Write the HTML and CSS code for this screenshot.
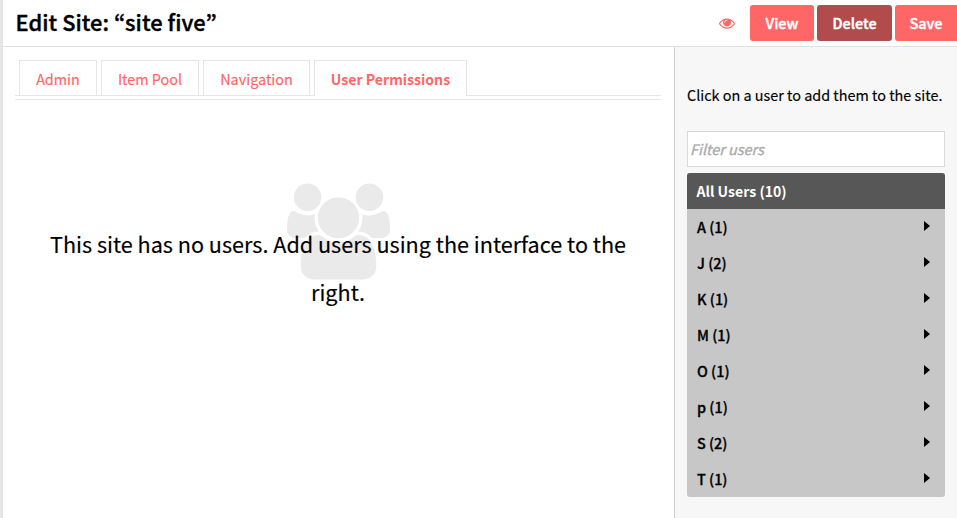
FILE: index.html
```html
<!DOCTYPE html>
<html lang="en">
<head>
<meta charset="utf-8">
<title>Edit Site</title>
<link rel="stylesheet" href="styles.css">
</head>
<body>
<div class="app">
  <header class="topbar">
    <h1 class="title">Edit Site: “site five”</h1>
    <div class="actions">
      <svg class="eye" viewBox="0 0 1792 1792"><path d="M1664 960q-152-236-381-353 61 104 61 225 0 185-131.5 316.5t-316.5 131.5-316.5-131.5-131.5-316.5q0-121 61-225-229 117-381 353 133 205 333.5 326.500t434.500 121.500 434.500-121.500 333.500-326.500zm-720-384q0-20-14-34t-34-14q-125 0-214.500 89.500t-89.500 214.500q0 20 14 34t34 14 34-14 14-34q0-86 61-147t147-61q20 0 34-14t14-34zm848 384q0 34-20 69-140 230-376.500 368.500t-499.500 138.500-499.500-139-376.500-368q-20-35-20-69t20-69q140-229 376.500-368t499.500-139 499.500 139 376.500 368q20 35 20 69z"/></svg>
      <button class="btn view">View</button>
      <button class="btn delete">Delete</button>
      <button class="btn save">Save</button>
    </div>
  </header>
  <div class="body">
    <main class="main">
      <nav class="tabs">
        <a class="tab admin">Admin</a>
        <a class="tab pool">Item Pool</a>
        <a class="tab navigation">Navigation</a>
        <a class="tab permissions active">User Permissions</a>
      </nav>
      <section class="empty">
        <svg class="users" viewBox="0 0 1920 1792"><path d="M593 896q-162 5-265 128h-134q-82 0-138-40.500t-56-118.500q0-353 124-353 6 0 43.500 21t97.500 42.500 119 21.500q67 0 133-23-5 37-5 66 0 139 81 256zm1071 637q0 120-73 189.500t-194 69.500h-874q-121 0-194-69.500t-73-189.500q0-53 3.500-103.500t14-109 26.500-108.500 43-97.500 62-81 85.500-53.500 111.500-20q10 0 43 21.500t73 48 107 48 135 21.500 135-21.500 107-48 73-48 43-21.500q61 0 111.500 20t85.500 53.500 62 81 43 97.500 26.500 108.500 14 109 3.500 103.500zm-1024-1277q0 106-75 181t-181 75-181-75-75-181 75-181 181-75 181 75 75 181zm704 384q0 159-112.500 271.500t-271.500 112.500-271.500-112.500-112.500-271.500 112.500-271.500 271.500-112.500 271.500 112.500 112.500 271.500zm576 225q0 78-56 118.500t-138 40.500h-134q-103-123-265-128 81-117 81-256 0-29-5-66 66 23 133 23 59 0 119-21.500t97.500-42.500 43.500-21q124 0 124 353zm-128-609q0 106-75 181t-181 75-181-75-75-181 75-181 181-75 181 75 75 181z"/></svg>
        <p class="message">This site has no users. Add users using the interface to the right.</p>
      </section>
    </main>
    <aside class="side">
      <p class="hint">Click on a user to add them to the site.</p>
      <input class="filter" type="text" placeholder="Filter users">
      <div class="list">
        <div class="row head">All Users (10)</div>
        <div class="row">A (1)<i class="caret"></i></div>
        <div class="row">J (2)<i class="caret"></i></div>
        <div class="row">K (1)<i class="caret"></i></div>
        <div class="row">M (1)<i class="caret"></i></div>
        <div class="row">O (1)<i class="caret"></i></div>
        <div class="row">p (1)<i class="caret"></i></div>
        <div class="row">S (2)<i class="caret"></i></div>
        <div class="row">T (1)<i class="caret"></i></div>
      </div>
    </aside>
  </div>
</div>
</body>
</html>
```
FILE: styles.css
```css
* { box-sizing: border-box; }
body {
  margin: 0;
  overflow: hidden;
  background: #fff;
  color: #000;
  font: 14.4px/24px "Noto Sans CJK KR", "Open Sans", sans-serif;
  -webkit-text-stroke: 0.15px;
}
h1, p { margin: 0; }
.app {
  height: 518px;
  border-left: 3px solid #e6e6e6;
  display: flex;
  flex-direction: column;
}
.topbar {
  height: 47px;
  flex: none;
  display: flex;
  justify-content: space-between;
  align-items: center;
  padding-left: 12.5px;
  border-bottom: 1px solid #e1e1e1;
}
.title {
  padding-bottom: 2px;
  font-size: 21.8px;
  font-weight: 500;
  line-height: 44px;
  letter-spacing: 0.05px;
  -webkit-text-stroke: 0.4px;
}
.actions { display: flex; align-items: center; gap: 3px; }
.eye { width: 16px; height: 16px; fill: #ff6666; margin-right: 12px; }
.btn {
  height: 36px;
  padding: 0;
  border: 0;
  border-radius: 3px;
  background: #ff6666;
  color: #fff;
  font: inherit;
  font-weight: 500;
  text-align: center;
  -webkit-text-stroke: 0.4px;
}
.view { width: 64px; }
.delete { width: 75px; background: #b24c4c; }
.save { width: 62px; border-radius: 3px 0 0 3px; }
.body { flex: 1; display: flex; min-height: 0; }
.main { flex: 1; padding: 13px 13px 0 12px; }
.tabs {
  display: flex;
  gap: 4px;
  height: 40px;
  padding-left: 4px;
  border-bottom: 1px solid #e6e6e6;
  background: linear-gradient(#e6e6e6, #e6e6e6) 0 35px / 100% 1px no-repeat;
}
.tab {
  height: 35px;
  border: 1px solid #e6e6e6;
  border-bottom: 0;
  background: #fff;
  color: #ff6666;
  line-height: 35px;
  text-align: center;
}
.admin { width: 78px; }
.pool { width: 98px; }
.navigation { width: 107px; }
.permissions { width: 153px; }
.active { height: 36px; font-size: 14.1px; font-weight: 700; line-height: 37px; -webkit-text-stroke: 0; }
.empty { display: grid; justify-items: center; padding-top: 83px; }
.users { grid-area: 1 / 1; width: 103px; height: 97px; fill: #eaeaea; }
.message {
  grid-area: 1 / 1;
  width: 600px;
  margin-top: 37px;
  font-size: 21.6px;
  line-height: 48px;
  text-align: center;
}
.side {
  width: 283px;
  padding: 36px 12px 0;
  border-left: 1px solid #ccc;
  background: #f7f7f7;
}
.hint { white-space: nowrap; }
.filter {
  display: block;
  width: 258px;
  height: 36px;
  margin: 24px 0 6px;
  padding: 0 2px 2px;
  border: 1px solid #d9d9d9;
  background: #fff;
  font: inherit;
  font-style: italic;
}
.filter::placeholder { color: #a9a9a9; opacity: 1; -webkit-text-stroke: 0.3px; }
.list { width: 258px; border-radius: 3px; overflow: hidden; background: #c7c7c7; }
.row {
  display: flex;
  justify-content: space-between;
  align-items: center;
  height: 36px;
  padding: 0 15px 0 10px;
  font-weight: 500;
  -webkit-text-stroke: 0.3px;
}
.head {
  padding-left: 9.5px;
  background: #575757;
  color: #fff;
  font-size: 14.1px;
  font-weight: 700;
  -webkit-text-stroke: 0;
}
.caret {
  border: 5px solid transparent;
  border-left: 6px solid #000;
  border-right: 0;
  margin-top: -2px;
}
```
